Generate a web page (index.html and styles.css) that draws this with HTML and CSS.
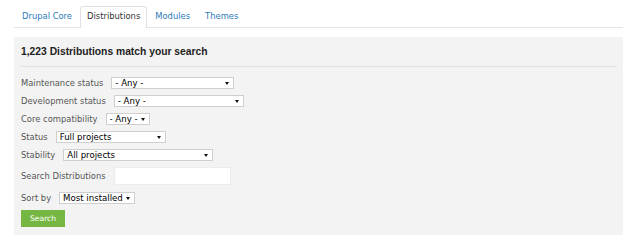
FILE: index.html
```html
<!doctype html>
<html lang="en">
  <head>
    <meta charset="UTF-8" />
    <meta name="viewport" content="width=device-width, initial-scale=1.0" />
    <title>Distributions</title>
    <link rel="stylesheet" href="styles.css">
  </head>
  <body>
    <div class="page">
      <ul class="tabs">
        <li><a href="#">Drupal Core</a></li>
        <li class="active"><a href="#">Distributions</a></li>
        <li><a href="#">Modules</a></li>
        <li><a href="#">Themes</a></li>
      </ul>

      <div class="panel">
        <h2>1,223 Distributions match your search</h2>

        <form class="filters">
          <div class="row">
            <label>Maintenance status</label>
            <span class="select w-maint">
              <select><option>- Any -</option></select>
            </span>
          </div>
          <div class="row">
            <label>Development status</label>
            <span class="select w-dev">
              <select><option>- Any -</option></select>
            </span>
          </div>
          <div class="row">
            <label>Core compatibility</label>
            <span class="select w-core">
              <select><option>- Any -</option></select>
            </span>
          </div>
          <div class="row">
            <label>Status</label>
            <span class="select w-status">
              <select><option>Full projects</option></select>
            </span>
          </div>
          <div class="row">
            <label>Stability</label>
            <span class="select w-stab">
              <select><option>All projects</option></select>
            </span>
          </div>
          <div class="row row-text">
            <label>Search Distributions</label>
            <input type="text" class="text-input">
          </div>
          <div class="row row-sort">
            <label>Sort by</label>
            <span class="select w-sort">
              <select><option>Most installed</option></select>
            </span>
          </div>
          <button type="button" class="button">Search</button>
        </form>
      </div>
    </div>
  </body>
</html>
```

FILE: styles.css
```css
body {
  font-family: "DejaVu Sans", Verdana, sans-serif;
  font-size: 8.4px;
  color: #555;
  background-color: white;
  margin: 0;
  padding: 0;
}
.page {
  margin: 0 17px 0 14px;
}
.tabs {
  display: flex;
  list-style: none;
  margin: 0;
  padding: 6px 0 0 1px;
  border-bottom: 1px solid #e4e4e4;
}
.tabs li {
  margin-right: 1px;
  margin-bottom: -1px;
  border: 1px solid transparent;
  border-bottom: none;
  border-radius: 3px 3px 0 0;
}
.tabs a {
  display: block;
  padding: 5px 6px 7px;
  line-height: 9px;
  color: #2a7ab9;
  text-decoration: none;
}
.tabs .active {
  background-color: white;
  border-color: #e0e0e0;
}
.tabs .active a {
  color: #333;
}
.panel {
  background-color: #f3f3f3;
  margin-top: 9px;
  padding: 8px 6px 8px 7px;
}
.panel h2 {
  font-family: "Liberation Sans", Arial, sans-serif;
  font-size: 10.3px;
  line-height: 13px;
  color: #222;
  margin: 0;
  padding-bottom: 8px;
  border-bottom: 1px solid #e2e2e2;
}
.filters {
  display: flex;
  flex-direction: column;
  align-items: flex-start;
  gap: 6px;
  padding-top: 10px;
}
.row {
  display: flex;
  align-items: center;
  gap: 8px;
  height: 12px;
}
.row label {
  white-space: nowrap;
}
.row-text {
  height: 18px;
}
.row-sort {
  margin-top: 1px;
}
.select {
  position: relative;
  display: block;
  height: 12px;
}
.select::after {
  content: "";
  position: absolute;
  right: 5px;
  top: 5px;
  border-left: 2px solid transparent;
  border-right: 2px solid transparent;
  border-top: 3px solid #111;
  pointer-events: none;
}
.select select {
  appearance: none;
  -webkit-appearance: none;
  box-sizing: border-box;
  width: 100%;
  height: 12px;
  margin: 0;
  padding: 0 0 0 3px;
  border: 1px solid #cfcfcf;
  border-radius: 0;
  background-color: white;
  font-family: inherit;
  font-size: 8.6px;
  line-height: 10px;
  color: #000;
}
.w-maint { width: 123px; }
.w-dev { width: 130px; }
.w-core { width: 44px; }
.w-status { width: 110px; }
.w-stab { width: 150px; }
.w-sort { width: 76px; }
.text-input {
  box-sizing: border-box;
  width: 117px;
  height: 18px;
  margin: 0;
  border: 1px solid #ececec;
  background-color: white;
}
.button {
  display: inline-block;
  box-sizing: border-box;
  height: 17px;
  padding: 0 9px;
  background-color: #76b744;
  color: white;
  font-family: inherit;
  font-size: 7.6px;
  border: none;
  border-radius: 0;
  cursor: pointer;
}
```
